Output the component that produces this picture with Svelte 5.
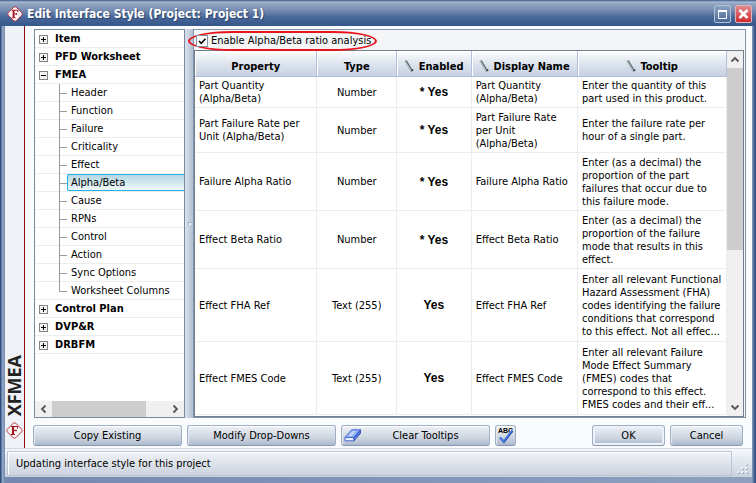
<script lang="ts">
	type Node = { label: string; open?: boolean; children?: string[] };
	type Row = {
		property: string[];
		type: string;
		enabled: string;
		display: string[];
		tooltip: string[];
		height: number;
	};

	const tree: Node[] = [
		{ label: 'Item' },
		{ label: 'PFD Worksheet' },
		{
			label: 'FMEA',
			open: true,
			children: [
				'Header',
				'Function',
				'Failure',
				'Criticality',
				'Effect',
				'Alpha/Beta',
				'Cause',
				'RPNs',
				'Control',
				'Action',
				'Sync Options',
				'Worksheet Columns'
			]
		},
		{ label: 'Control Plan' },
		{ label: 'DVP&R' },
		{ label: 'DRBFM' }
	];

	const columns = [
		{ label: 'Property', editable: false },
		{ label: 'Type', editable: false },
		{ label: 'Enabled', editable: true },
		{ label: 'Display Name', editable: true },
		{ label: 'Tooltip', editable: true }
	];

	const rows: Row[] = [
		{
			property: ['Part Quantity', '(Alpha/Beta)'],
			type: 'Number',
			enabled: '* Yes',
			display: ['Part Quantity', '(Alpha/Beta)'],
			tooltip: ['Enter the quantity of this', 'part used in this product.'],
			height: 31
		},
		{
			property: ['Part Failure Rate per', 'Unit (Alpha/Beta)'],
			type: 'Number',
			enabled: '* Yes',
			display: ['Part Failure Rate', 'per Unit', '(Alpha/Beta)'],
			tooltip: ['Enter the failure rate per', 'hour of a single part.'],
			height: 45
		},
		{
			property: ['Failure Alpha Ratio'],
			type: 'Number',
			enabled: '* Yes',
			display: ['Failure Alpha Ratio'],
			tooltip: ['Enter (as a decimal) the', 'proportion of the part', 'failures that occur due to', 'this failure mode.'],
			height: 58
		},
		{
			property: ['Effect Beta Ratio'],
			type: 'Number',
			enabled: '* Yes',
			display: ['Effect Beta Ratio'],
			tooltip: ['Enter (as a decimal) the', 'proportion of the failure', 'mode that results in this', 'effect.'],
			height: 58
		},
		{
			property: ['Effect FHA Ref'],
			type: 'Text (255)',
			enabled: 'Yes',
			display: ['Effect FHA Ref'],
			tooltip: [
				'Enter all relevant Functional',
				'Hazard Assessment (FHA)',
				'codes identifying the failure',
				'conditions that correspond',
				'to this effect. Not all effec...'
			],
			height: 73
		},
		{
			property: ['Effect FMES Code'],
			type: 'Text (255)',
			enabled: 'Yes',
			display: ['Effect FMES Code'],
			tooltip: [
				'Enter all relevant Failure',
				'Mode Effect Summary',
				'(FMES) codes that',
				'correspond to this effect.',
				'FMES codes and their eff...'
			],
			height: 73
		}
	];

	let selected = $state('Alpha/Beta');
	let enabled = $state(true);
</script>

{#snippet logo(size: number)}
	<svg class="logo" width={size} height={size} viewBox="0 0 17 17" aria-hidden="true">
		<path d="M7.3 1.2Q8.5 .4 9.7 1.2L15.8 7.3Q16.6 8.5 15.8 9.7L9.7 15.8Q8.5 16.6 7.3 15.8L1.2 9.7Q.4 8.5 1.2 7.3Z" fill="#fdf4f4" stroke="#b5343e" />
		<path d="M7 4.5V12.5" fill="none" stroke="#a5121f" stroke-width="2" />
		<path d="M5 4.5H11.5V6.5M7 8.5H10.5M10 7.5V9.5M5 12.5H9" fill="none" stroke="#a5121f" />
	</svg>
{/snippet}

{#snippet lines(text: string[])}
	{#each text as line, i}{#if i > 0}<br />{/if}{line}{/each}
{/snippet}

<div class="window">
	<header class="titlebar">
		{@render logo(16)}
		<h1>Edit Interface Style (Project: Project 1)</h1>
		<button class="win-btn" aria-label="Maximize">
			<svg width="9" height="9" viewBox="0 0 9 9"><path d="M.5 1V8.5H8.5V1M0 1.5H9" fill="none" stroke="#fff" /><path d="M0 1H9" stroke="#fff" stroke-width="2" /></svg>
		</button>
		<button class="win-btn close" aria-label="Close">
			<svg width="11" height="10" viewBox="0 0 11 10"><path d="M1.5 1L9.5 9M9.5 1L1.5 9" stroke="#fff" stroke-width="2.6" /></svg>
		</button>
	</header>

	<div class="body">
		<aside class="brand">
			<span>XFMEA</span>
			{@render logo(17)}
		</aside>

		<main>
			<div class="split">
				<nav class="tree">
					<ul>
						{#each tree as node}
							<li>
								<div class="node">
									<button class="expander" aria-label="Toggle {node.label}">
										<svg width="9" height="9" viewBox="0 0 9 9">
											<rect x=".5" y=".5" width="8" height="8" fill="#f4f4f4" stroke="#848484" />
											<path d={node.open ? 'M2 4.5H7' : 'M2 4.5H7M4.5 2V7'} stroke="#000" />
										</svg>
									</button>
									{node.label}
								</div>
								{#if node.open && node.children}
									<ul>
										{#each node.children as child}
											<li class="child">
												<span class="branch"></span>
												<button class="leaf" class:selected={child === selected} onclick={() => (selected = child)}>
													{child}
												</button>
											</li>
										{/each}
									</ul>
								{/if}
							</li>
						{/each}
					</ul>
					<div class="hscroll">
						<svg width="17" height="16" viewBox="0 0 17 16"><path d="M10.5 4.5L7 8L10.5 11.5" fill="none" stroke="#555" stroke-width="1.8" /></svg>
						<div class="track"><div class="thumb"></div></div>
						<svg width="17" height="16" viewBox="0 0 17 16"><path d="M6.5 4.5L10 8L6.5 11.5" fill="none" stroke="#555" stroke-width="1.8" /></svg>
					</div>
				</nav>

				<div class="splitter"><span></span></div>

				<section class="panel">
					<div class="option">
						<label class="callout">
							<input type="checkbox" bind:checked={enabled} />
							Enable Alpha/Beta ratio analysis
						</label>
					</div>
					<div class="grid">
						<div class="table-wrap">
							<table>
								<colgroup>
									<col class="c-property" />
									<col class="c-type" />
									<col class="c-enabled" />
									<col class="c-display" />
									<col class="c-tooltip" />
								</colgroup>
								<thead>
									<tr>
										{#each columns as col}
											<th>
												{#if col.editable}
													<svg width="10" height="12" viewBox="0 0 10 12" aria-hidden="true">
														<path d="M1 .5L6.5 10" stroke="#b4bec2" stroke-width="2" />
														<path d="M2.2 .5L7.6 9.5" stroke="#5c6d71" stroke-width="1.3" />
														<path d="M6.5 11.5L9.3 11V9.2L7.8 9Z" fill="#3c4547" />
													</svg>
												{/if}
												{col.label}
											</th>
										{/each}
									</tr>
								</thead>
								<tbody>
									{#each rows as row}
										<tr style="height: {row.height}px">
											<td>{@render lines(row.property)}</td>
											<td class="center">{row.type}</td>
											<td class="center yes">{row.enabled}</td>
											<td>{@render lines(row.display)}</td>
											<td>{@render lines(row.tooltip)}</td>
										</tr>
									{/each}
								</tbody>
							</table>
						</div>
						<div class="vscroll">
							<svg width="16" height="17" viewBox="0 0 16 17"><path d="M4.5 10.5L8 7L11.5 10.5" fill="none" stroke="#555" stroke-width="1.8" /></svg>
							<div class="track"><div class="thumb"></div></div>
							<svg width="16" height="17" viewBox="0 0 16 17"><path d="M4.5 6.5L8 10L11.5 6.5" fill="none" stroke="#555" stroke-width="1.8" /></svg>
						</div>
					</div>
				</section>
			</div>

			<div class="actions">
				<button class="btn wide">Copy Existing</button>
				<button class="btn wide">Modify Drop-Downs</button>
				<button class="btn wide with-icon">
					<svg width="18" height="13" viewBox="0 0 18 13" aria-hidden="true">
						<path d="M1 8.5L7.5 .8H16.5L10 8.5Z" fill="#8fb0f5" stroke="#4a6bd0" />
						<path d="M4 7L8.5 2H12L7.5 7Z" fill="#c3d6ff" />
						<path d="M1 8.5H10V11.8H1Z" fill="#e6eeff" stroke="#4a6bd0" />
						<path d="M10 8.5L16.5 .8V4.3L10 11.8Z" fill="#5077df" stroke="#3a58bd" />
					</svg>
					<span>Clear Tooltips</span>
				</button>
				<button class="btn icon" aria-label="Check spelling">
					<svg width="19" height="19" viewBox="0 0 19 19" aria-hidden="true">
						<text x="2" y="7">ABC</text>
						<path d="M4 11.5L7.8 15.8L16.5 4.5" fill="none" stroke="#4a78dc" stroke-width="2.6" />
						<path d="M8 16.5L16.8 5" fill="none" stroke="#2f55b0" />
					</svg>
				</button>
				<span class="spacer"></span>
				<button class="btn default">OK</button>
				<button class="btn">Cancel</button>
			</div>
		</main>
	</div>

	<footer>
		<div class="status">Updating interface style for this project</div>
		<svg class="grip" width="12" height="12" viewBox="0 0 12 12" aria-hidden="true">
			<path d="M9 1h2v2h-2zM9 5h2v2h-2zM9 9h2v2h-2zM5 5h2v2h-2zM5 9h2v2h-2zM1 9h2v2h-2z" fill="#a9b5c6" />
			<path d="M8 0h2v2h-2zM8 4h2v2h-2zM8 8h2v2h-2zM4 4h2v2h-2zM4 8h2v2h-2zM0 8h2v2h-2z" fill="#eef1f6" />
		</svg>
	</footer>
</div>

<style>
	:global(body) {
		background: #2f4f80;
	}

	.window {
		box-sizing: border-box;
		display: flex;
		flex-direction: column;
		height: 100vh;
		padding: 0 4px 6px 5px;
		background: linear-gradient(90deg, #2f4f80 1px, #8fa3c2 2px, #8fa3c2 3px, #7389b0 5px, #8da0bf calc(100% - 4px), #4b6895 calc(100% - 2px), #2c4c80);
		font-family: Tahoma, 'DejaVu Sans Condensed', 'DejaVu Sans', sans-serif;
		font-size: 11px;
		line-height: 13px;
		color: #000;
	}

	button {
		font: inherit;
		color: inherit;
	}

	.titlebar {
		display: flex;
		align-items: center;
		gap: 3px;
		height: 26px;
		flex: none;
		box-sizing: border-box;
		margin: 0 -4px 0 -5px;
		padding: 2px 4px 0 7px;
		background: linear-gradient(#3b5888 0, #7088b0 1px, #aab8cf 2px, #8fa2c1 4px, #7c92b5 9px, #4a6899 17px, #36588c 25px);
	}

	h1 {
		flex: 1;
		margin: 0 0 0 1px;
		font-size: 12px;
		line-height: 18px;
		font-weight: bold;
		color: #fff;
		text-shadow: 1px 1px 1px #29446f;
		white-space: nowrap;
	}

	.win-btn {
		display: grid;
		place-items: center;
		box-sizing: border-box;
		width: 17px;
		height: 18px;
		padding: 0;
		margin-left: 1px;
		border: 1px solid #b4c1d5;
		border-radius: 2px;
		background: linear-gradient(#8da2c2, #466896);
	}

	.close {
		border-color: #dfb4bb;
		background: linear-gradient(#e08b8f, #cf2a2f);
	}

	.body {
		display: flex;
		flex: 1;
		min-height: 0;
		background: #fafbfd;
	}

	.brand {
		display: flex;
		flex-direction: column;
		align-items: center;
		justify-content: flex-end;
		gap: 6px;
		width: 19px;
		padding-bottom: 9px;
		background: #eff3f7;
		border-right: 1px solid #940b10;
	}

	.brand span {
		writing-mode: vertical-rl;
		transform: rotate(180deg);
		font: bold 18px/19px 'Open Sans', sans-serif;
		color: #222;
	}

	main {
		display: flex;
		flex-direction: column;
		flex: 1;
		min-width: 0;
		padding: 3px 6px 2px 9px;
	}

	.split {
		display: flex;
		flex: 1;
		min-height: 0;
	}

	.tree {
		display: flex;
		flex-direction: column;
		width: 149px;
		flex: none;
		border: 1px solid #7a8a9c;
		background: #fff;
		overflow: hidden;
	}

	ul {
		list-style: none;
		margin: 0;
		padding: 0;
	}

	.tree > ul {
		flex: 1;
		min-height: 0;
		overflow: hidden;
	}

	.node {
		display: flex;
		align-items: center;
		gap: 7px;
		height: 17px;
		padding-left: 4px;
		border-bottom: 1px solid #ededed;
		font-weight: bold;
	}

	.expander {
		display: flex;
		padding: 2px 0 0 0;
		border: 0;
		background: none;
	}

	.child {
		display: flex;
		height: 17px;
		padding-left: 24px;
		border-bottom: 1px solid #ededed;
	}

	.branch {
		width: 8px;
		height: 18px;
		background:
			linear-gradient(#999, #999) 0 0 / 1px 100% no-repeat,
			linear-gradient(#999, #999) 0 9px / 100% 1px no-repeat;
	}

	.child:last-child .branch {
		height: 10px;
	}

	.leaf {
		box-sizing: border-box;
		flex: 1;
		height: 17px;
		padding: 0 0 0 3px;
		border: 1px solid transparent;
		border-right: 0;
		border-radius: 2px 0 0 2px;
		background: none;
		text-align: left;
	}

	.leaf.selected {
		border-color: #1fb5ea;
		background: linear-gradient(#b5d8e3, #eff8fa);
	}

	.hscroll,
	.vscroll {
		display: flex;
		flex: none;
		background: #f0f0f0;
	}

	.vscroll {
		flex-direction: column;
	}

	.track {
		flex: 1;
	}

	.thumb {
		background: #cdcdcd;
	}

	.hscroll .thumb {
		width: 82%;
		height: 16px;
	}

	.vscroll .thumb {
		width: 16px;
		height: 55%;
	}

	.splitter {
		display: grid;
		place-items: center;
		width: 8px;
		flex: none;
		background: linear-gradient(90deg, #dbe3ee, #b1bfd2);
	}

	.splitter span {
		width: 2px;
		height: 2px;
		border: 1px solid #98a9c2;
		border-width: 1px 0 0 1px;
		background: #fff;
	}

	.panel {
		display: flex;
		flex-direction: column;
		flex: 1;
		min-width: 0;
		padding-right: 1px;
		border: 1px solid #8093aa;
		background: #f4f5f6;
	}

	.option {
		display: flex;
		align-items: center;
		height: 20px;
		flex: none;
	}

	.callout {
		display: flex;
		align-items: center;
		gap: 3px;
		box-sizing: border-box;
		height: 20px;
		margin: 1px 0 0 -6px;
		padding: 0 4px 0 6px;
		border: 2px solid #e8141b;
		border-radius: 44px / 10px;
		white-space: nowrap;
		z-index: 1;
	}

	input {
		appearance: none;
		box-sizing: border-box;
		width: 12px;
		height: 12px;
		margin: 0;
		border: 1px solid #8493a5;
		background: #fff;
	}

	input:checked {
		background: #fff url("data:image/svg+xml,%3Csvg xmlns='http://www.w3.org/2000/svg' viewBox='0 0 10 10'%3E%3Cpath d='M2 5L4.2 7.3L8.5 2.8' fill='none' stroke='%23000' stroke-width='1.5'/%3E%3C/svg%3E") center / 10px no-repeat;
	}

	.grid {
		display: flex;
		flex: 1;
		min-height: 0;
		border: 1px solid #747f8e;
		background: #fff;
	}

	.table-wrap {
		flex: 1;
		min-width: 0;
		overflow: hidden;
	}

	table {
		width: 100%;
		table-layout: fixed;
		border-collapse: separate;
		border-spacing: 0;
	}

	.c-property {
		width: 23%;
	}

	.c-type {
		width: 15%;
	}

	.c-enabled {
		width: 14%;
	}

	.c-display {
		width: 20%;
	}

	.c-tooltip {
		width: 28%;
	}

	th {
		box-sizing: border-box;
		height: 26px;
		padding: 5px 2px 0;
		border-right: 1px solid #b1bfda;
		border-bottom: 1px solid #b1bfda;
		background: linear-gradient(#fcfdfe, #dfe5ef 50%, #c6d0e1);
		box-shadow: inset 1px 1px #fff;
		white-space: nowrap;
	}

	th svg {
		margin-right: 1px;
		vertical-align: -2px;
	}

	td {
		box-sizing: border-box;
		padding: 0 0 0 4px;
		border-right: 1px solid #ededed;
		border-bottom: 1px solid #ededed;
		white-space: nowrap;
	}

	.center {
		padding: 0;
		text-align: center;
	}

	.yes {
		font: bold 12px/14px 'Liberation Sans', Arial, sans-serif;
	}

	.actions {
		display: flex;
		gap: 5px;
		flex: none;
		padding: 7px 3px 0 0;
		margin-left: -1px;
	}

	.btn {
		box-sizing: border-box;
		width: 73px;
		height: 21px;
		padding: 0;
		border: 1px solid #9fb0c6;
		border-bottom-color: #8498b3;
		border-radius: 3px;
		background: linear-gradient(#eff1f5, #ced6e1 60%, #aebbcd);
		box-shadow: inset 0 1px #fff, inset 1px 0 #e3e8ef;
	}

	.wide {
		width: 149px;
	}

	.icon {
		width: 21px;
		overflow: hidden;
	}

	.icon svg {
		display: block;
	}

	.icon text {
		font: bold 7px 'Liberation Sans', sans-serif;
	}

	.with-icon {
		display: flex;
		align-items: center;
		padding-left: 2px;
	}

	.with-icon span {
		flex: 1;
	}

	.default {
		box-shadow: inset 0 0 0 2px #eef2f8;
	}

	.spacer {
		flex: 1;
	}

	footer {
		display: flex;
		align-items: flex-end;
		flex: none;
		padding: 2px 2px 1px 2px;
		border-top: 1px solid #d0d8e2;
		background: linear-gradient(#f6f8fb, #c8d1de);
	}

	.status {
		box-sizing: border-box;
		flex: 1;
		height: 25px;
		padding: 5px 8px;
		border: 1px solid #b9c5d5;
		box-shadow: inset 1px 1px #fff;
		background: linear-gradient(#eff2f6, #ccd3df);
	}

	.grip {
		margin: 0 1px 1px 5px;
	}
</style>
